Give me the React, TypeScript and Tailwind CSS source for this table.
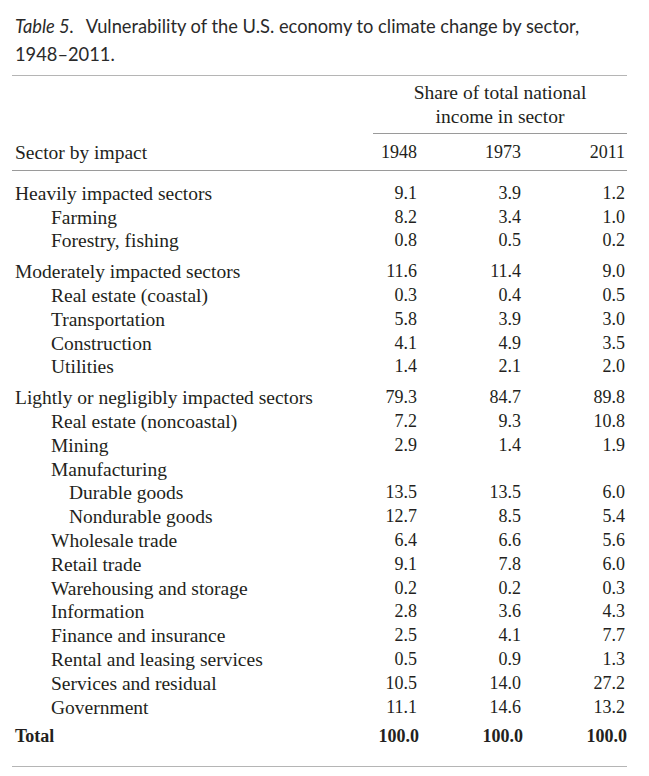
import React from "react";

type Row = { label: string; indent: number; v: [string, string, string]; gapBefore?: boolean };

const rows: Row[] = [
  { label: "Heavily impacted sectors", indent: 0, v: ["9.1", "3.9", "1.2"] },
  { label: "Farming", indent: 1, v: ["8.2", "3.4", "1.0"] },
  { label: "Forestry, fishing", indent: 1, v: ["0.8", "0.5", "0.2"] },
  { label: "Moderately impacted sectors", indent: 0, v: ["11.6", "11.4", "9.0"], gapBefore: true },
  { label: "Real estate (coastal)", indent: 1, v: ["0.3", "0.4", "0.5"] },
  { label: "Transportation", indent: 1, v: ["5.8", "3.9", "3.0"] },
  { label: "Construction", indent: 1, v: ["4.1", "4.9", "3.5"] },
  { label: "Utilities", indent: 1, v: ["1.4", "2.1", "2.0"] },
  { label: "Lightly or negligibly impacted sectors", indent: 0, v: ["79.3", "84.7", "89.8"], gapBefore: true },
  { label: "Real estate (noncoastal)", indent: 1, v: ["7.2", "9.3", "10.8"] },
  { label: "Mining", indent: 1, v: ["2.9", "1.4", "1.9"] },
  { label: "Manufacturing", indent: 1, v: ["", "", ""] },
  { label: "Durable goods", indent: 2, v: ["13.5", "13.5", "6.0"] },
  { label: "Nondurable goods", indent: 2, v: ["12.7", "8.5", "5.4"] },
  { label: "Wholesale trade", indent: 1, v: ["6.4", "6.6", "5.6"] },
  { label: "Retail trade", indent: 1, v: ["9.1", "7.8", "6.0"] },
  { label: "Warehousing and storage", indent: 1, v: ["0.2", "0.2", "0.3"] },
  { label: "Information", indent: 1, v: ["2.8", "3.6", "4.3"] },
  { label: "Finance and insurance", indent: 1, v: ["2.5", "4.1", "7.7"] },
  { label: "Rental and leasing services", indent: 1, v: ["0.5", "0.9", "1.3"] },
  { label: "Services and residual", indent: 1, v: ["10.5", "14.0", "27.2"] },
  { label: "Government", indent: 1, v: ["11.1", "14.6", "13.2"] },
];

const indentCls = ["pl-[3px]", "pl-[39px]", "pl-[57px]"];

export default function App() {
  return (
    <div className="w-[649px] h-[776px] bg-white text-[#231f20] overflow-hidden">
      <div className="pl-[15px] pr-[20px] pt-[12px] font-['Lato',sans-serif] text-[18.3px] leading-[28px] text-[#2a2a2a]">
        <span className="italic pr-[3px]">Table 5.</span>&nbsp; Vulnerability of the U.S. economy to climate change by sector, 1948–2011.
      </div>
      <div className="ml-[12px] w-[615px] mt-[7px] border-t border-[#b5b5b5] font-['Liberation_Serif',serif] text-[18px] leading-[23.8px]">
        <div className="ml-auto w-[254px] pt-[5px] pb-[4px] border-b border-[#9a9a9a] text-center text-[19.5px] leading-[24px]">
          Share of total national
          <br />
          income in sector
        </div>
        <div className="grid grid-cols-[1fr_104px_104px_104px] pr-[2px] pt-[7px] pb-[5px] border-b border-[#9a9a9a]">
          <div className="pl-[3px] text-[19.5px]">Sector by impact</div>
          <div className="text-right">1948</div>
          <div className="text-right">1973</div>
          <div className="text-right">2011</div>
        </div>
        <div className="pt-[11px]">
          {rows.map((r, i) => (
            <div
              key={i}
              className={`grid grid-cols-[1fr_104px_104px_104px] pr-[2px] ${r.gapBefore ? "mt-[7px]" : ""}`}
            >
              <div className={`${indentCls[r.indent]} text-[19.5px]`}>{r.label}</div>
              <div className="text-right">{r.v[0]}</div>
              <div className="text-right">{r.v[1]}</div>
              <div className="text-right">{r.v[2]}</div>
            </div>
          ))}
          <div className="grid grid-cols-[1fr_104px_104px_104px] mt-[6px] font-bold">
            <div className="pl-[3px] text-[18px]">Total</div>
            <div className="text-right">100.0</div>
            <div className="text-right">100.0</div>
            <div className="text-right">100.0</div>
          </div>
        </div>
        <div className="mt-[17px] border-t border-[#b5b5b5]" />
      </div>
    </div>
  );
}
